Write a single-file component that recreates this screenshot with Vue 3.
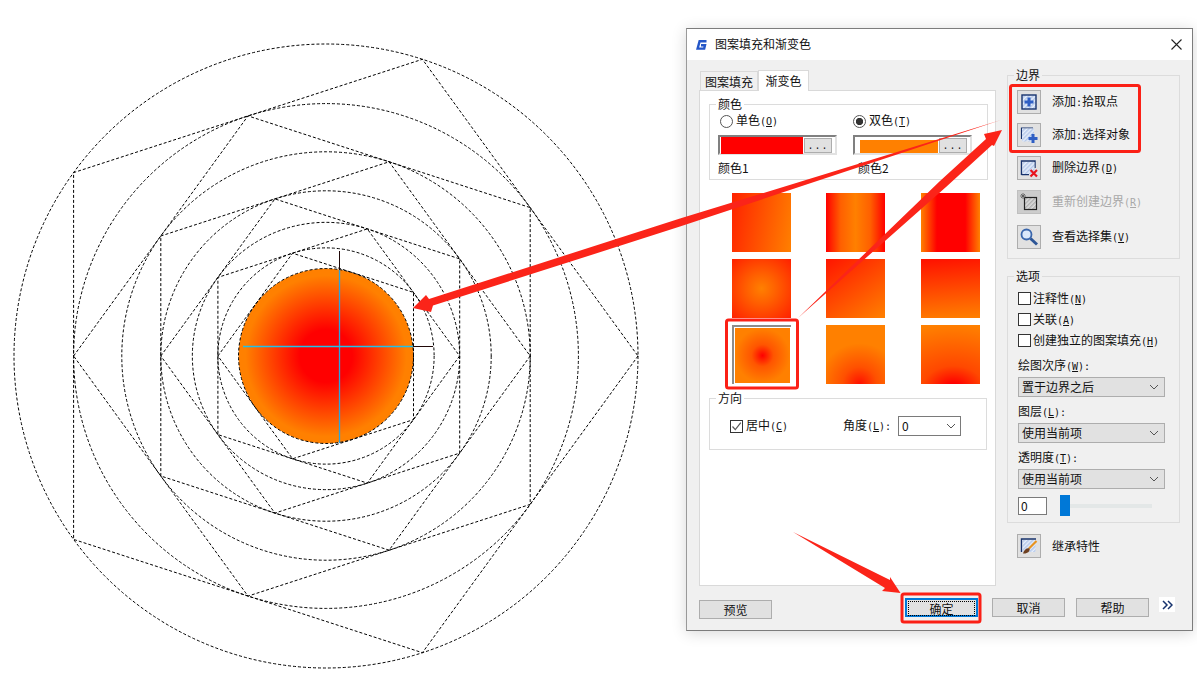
<template>
  <div class="page">
    <svg class="drawing" width="686" height="678" viewBox="0 0 686 678">
      <defs>
        <radialGradient id="fillGrad" cx="0.5" cy="0.5" r="0.5">
          <stop offset="0.3" stop-color="#ff0000" />
          <stop offset="0.92" stop-color="#ff8000" />
        </radialGradient>
      </defs>
      <circle :cx="cx" :cy="cy" :r="radii[6]" fill="url(#fillGrad)" />
      <circle
        v-for="r in radii"
        :key="r"
        :cx="cx"
        :cy="cy"
        :r="r"
        fill="none"
        stroke="#000"
        stroke-dasharray="3 2"
      />
      <polygon
        v-for="p in pentagons"
        :key="p"
        :points="p"
        fill="none"
        stroke="#000"
        stroke-dasharray="3 2"
      />
      <path d="M339.5 251V270M413 346.5H433" stroke="#200808" fill="none" />
      <path d="M339.5 270V443" stroke="#2aa4e0" stroke-width="1.3" fill="none" />
      <path d="M243 346.5H413" stroke="#22c0e8" stroke-width="1.5" fill="none" />
    </svg>

    <div class="dialog">
      <div class="titlebar">
        <svg class="logo" width="14" height="14" viewBox="0 0 14 14">
          <path d="M12.5 3.2H5.6L3.6 10.6H10.2L11 7.2H7" fill="none" stroke="#2456c8" stroke-width="2.4" />
        </svg>
        <span class="title">图案填充和渐变色</span>
        <svg class="close" width="11" height="11" viewBox="0 0 11 11">
          <path d="M0.5 0.5L10.5 10.5M10.5 0.5L0.5 10.5" stroke="#222" stroke-width="1.1" />
        </svg>
      </div>

      <div class="columns">
        <div class="left">
          <div class="tabs">
            <div class="tab">图案填充</div>
            <div class="tab active">渐变色</div>
          </div>
          <div class="panel">
            <div class="group color-group">
              <span class="legend">颜色</span>
              <div class="color-col">
                <div class="radio-row first">
                  <span class="radio"></span>
                  <span>单色<span class="key">(<u>O</u>)</span></span>
                </div>
                <div class="swatch">
                  <span class="swatch-fill red"></span>
                  <span class="dots">...</span>
                </div>
                <div class="color-label">颜色1</div>
              </div>
              <div class="color-col">
                <div class="radio-row">
                  <span class="radio checked"></span>
                  <span>双色<span class="key">(<u>T</u>)</span></span>
                </div>
                <div class="swatch">
                  <span class="swatch-fill orange"></span>
                  <span class="dots">...</span>
                </div>
                <div class="color-label shifted">颜色2</div>
              </div>
            </div>

            <div class="tiles">
              <div
                v-for="t in tiles"
                :key="t"
                class="tile"
                :class="t"
              ></div>
            </div>

            <div class="group direction">
              <span class="legend">方向</span>
              <span class="check on">
                <svg width="11" height="11" viewBox="0 0 11 11">
                  <path d="M1.5 5.5L4.3 8.6L9.8 1.6" fill="none" stroke="#555" stroke-width="1.2" />
                </svg>
              </span>
              <span class="centered">居中<span class="key">(<u>C</u>)</span></span>
              <span class="angle">角度<span class="key">(<u>L</u>):</span></span>
              <div class="angle-select">
                <span>0</span>
                <svg width="10" height="6" viewBox="0 0 10 6">
                  <path d="M1 1L5 5L9 1" fill="none" stroke="#555" />
                </svg>
              </div>
            </div>
          </div>
        </div>

        <div class="right">
          <div class="group bounds">
            <span class="legend soft">边界</span>
            <div v-for="a in actions" :key="a.icon" class="action" :class="{ off: a.off }">
              <span class="icon-btn">
                <svg width="20" height="20" viewBox="0 0 20 20">
                  <template v-if="a.icon === 'pick'">
                    <rect x="3" y="3" width="14" height="14" fill="url(#hatch)" stroke="#17336e" stroke-width="1.4" />
                    <path d="M10 5.5V14.5M5.5 10H14.5" stroke="#2f5fc4" stroke-width="3" />
                  </template>
                  <template v-else-if="a.icon === 'select'">
                    <path d="M2.5 14V3H14" fill="none" stroke="#17336e" stroke-width="1.2" />
                    <rect x="3" y="3.5" width="12" height="13" fill="url(#hatch)" />
                    <path d="M14 9V18M9.5 13.5H18.5" stroke="#2f5fc4" stroke-width="3" />
                  </template>
                  <template v-else-if="a.icon === 'remove'">
                    <path d="M2.5 17V3H16V10M2.5 16.5H10" fill="none" stroke="#17336e" stroke-width="1.4" />
                    <rect x="3.5" y="4" width="12" height="12" fill="url(#hatch)" />
                    <path d="M11.5 12L18 18.5M18 12L11.5 18.5" stroke="#e8141c" stroke-width="2.2" />
                  </template>
                  <template v-else-if="a.icon === 'rebuild'">
                    <rect x="5.5" y="5.5" width="12" height="12" fill="url(#grayHatch)" stroke="#222" stroke-width="1.2" />
                    <path d="M4 1V7M1 4H7M2 2L6 6M6 2L2 6" stroke="#555" stroke-width="0.8" />
                  </template>
                  <template v-else>
                    <circle cx="7.5" cy="7.5" r="5" fill="#dbe8fa" stroke="#3a66ac" stroke-width="1.8" />
                    <path d="M11.5 11.5L18 17.5" stroke="#2c5596" stroke-width="3" />
                  </template>
                </svg>
              </span>
              <span class="action-text">
                <template v-if="a.pre">{{ a.pre }}<span class="key">:</span></template>{{ a.text }}<span v-if="a.key" class="key">(<u>{{ a.key }}</u>)</span>
              </span>
            </div>
          </div>

          <div class="group options">
            <span class="legend soft">选项</span>
            <div class="check-row">
              <span class="check"></span>
              <span>注释性<span class="key">(<u>N</u>)</span></span>
            </div>
            <div class="check-row">
              <span class="check"></span>
              <span>关联<span class="key">(<u>A</u>)</span></span>
            </div>
            <div class="check-row">
              <span class="check"></span>
              <span>创建独立的图案填充<span class="key">(<u>H</u>)</span></span>
            </div>
            <div class="field-label first-field">绘图次序<span class="key">(<u>W</u>):</span></div>
            <div class="select">
              <span>置于边界之后</span>
              <svg width="10" height="6" viewBox="0 0 10 6"><path d="M1 1L5 5L9 1" fill="none" stroke="#555" /></svg>
            </div>
            <div class="field-label">图层<span class="key">(<u>L</u>):</span></div>
            <div class="select">
              <span>使用当前项</span>
              <svg width="10" height="6" viewBox="0 0 10 6"><path d="M1 1L5 5L9 1" fill="none" stroke="#555" /></svg>
            </div>
            <div class="field-label">透明度<span class="key">(<u>T</u>):</span></div>
            <div class="select">
              <span>使用当前项</span>
              <svg width="10" height="6" viewBox="0 0 10 6"><path d="M1 1L5 5L9 1" fill="none" stroke="#555" /></svg>
            </div>
            <div class="slider-row">
              <div class="num">0</div>
              <div class="slider">
                <span class="thumb"></span>
                <span class="track"></span>
              </div>
            </div>
          </div>

          <div class="action inherit">
            <span class="icon-btn">
              <svg width="20" height="20" viewBox="0 0 20 20">
                <path d="M2.5 16V3H17" fill="none" stroke="#17336e" stroke-width="1.4" />
                <rect x="3.5" y="4" width="13" height="12" fill="url(#hatch)" />
                <path d="M17.5 5L10 12.5" stroke="#e8931e" stroke-width="2.2" />
                <path d="M4 17.5C5 13.5 8 11.5 10.5 12.5C11.5 15 8.5 18 4 17.5Z" fill="#6e4020" />
              </svg>
            </span>
            <span class="action-text">继承特性</span>
          </div>
        </div>
      </div>

      <div class="footer">
        <div class="btn preview">预览</div>
        <div class="btn ok"><span class="ok-inner">确定</span></div>
        <div class="btn cancel">取消</div>
        <div class="btn help">帮助</div>
        <div class="more">
          <svg width="11" height="10" viewBox="0 0 11 10">
            <path d="M1 1L5 5L1 9M6 1L10 5L6 9" fill="none" stroke="#17336e" stroke-width="1.5" />
          </svg>
        </div>
      </div>
    </div>

    <svg class="overlay" width="1197" height="678" viewBox="0 0 1197 678">
      <defs>
        <pattern id="hatch" width="3" height="3" patternUnits="userSpaceOnUse" patternTransform="rotate(45)">
          <rect width="3" height="3" fill="#e6eefb" />
          <rect width="1.5" height="3" fill="#b4c8ea" />
        </pattern>
        <pattern id="grayHatch" width="3" height="3" patternUnits="userSpaceOnUse" patternTransform="rotate(45)">
          <rect width="3" height="3" fill="#dedede" />
          <rect width="1.5" height="3" fill="#b0b0b0" />
        </pattern>
      </defs>
      <g fill="none" stroke="#fb2016" stroke-width="3">
        <rect x="1010.5" y="85.5" width="129" height="66" rx="2" />
        <rect x="726.5" y="320" width="71" height="68" rx="2" />
        <rect x="902" y="594" width="78" height="28" rx="2" />
      </g>
      <g fill="#fb2419">
        <polygon points="1001,120 680,218.6 429,299 426,295 413,308 431,312 433,305.6 680,226.6" />
        <polygon points="798,318 940,181 986,139 984,134 1002,130 994,146 992,145 946,187" />
        <polygon points="793,532 890,580 890,577 900.5,593 882,591 885,588" />
      </g>
    </svg>
  </div>
</template>

<script setup>
const cx = 326
const cy = 356

// each circle is inscribed in the previous pentagon
const radii = []
for (let i = 0; i < 7; i++) {
  radii.push(+(312 * Math.pow(Math.cos(Math.PI / 5), i)).toFixed(2))
}

const pentagons = radii.slice(0, 6).map((r, i) => {
  const pts = []
  for (let k = 0; k < 5; k++) {
    const a = (k * 72 + (i % 2 ? 180 : 0)) * Math.PI / 180
    pts.push((cx + r * Math.cos(a)).toFixed(1) + ',' + (cy + r * Math.sin(a)).toFixed(1))
  }
  return pts.join(' ')
})

const tiles = ['t1', 't2', 't3', 't4', 't5', 't6', 't7', 't8', 't9']

const actions = [
  { icon: 'pick', pre: '添加', text: '拾取点' },
  { icon: 'select', pre: '添加', text: '选择对象' },
  { icon: 'remove', text: '删除边界', key: 'D' },
  { icon: 'rebuild', text: '重新创建边界', key: 'R', off: true },
  { icon: 'view', text: '查看选择集', key: 'V' }
]
</script>

<style>
html, body {
  margin: 0;
  background: #fff;
}
</style>

<style scoped>
.page {
  position: relative;
  display: flex;
  align-items: flex-start;
  width: 1197px;
  height: 678px;
  overflow: hidden;
  background: #fff;
  font-family: "Noto Sans CJK SC", "Liberation Sans", sans-serif;
  font-size: 12px;
  line-height: 14px;
  color: #111;
}
.drawing {
  flex: none;
  display: block;
}
.overlay {
  position: absolute;
  left: 0;
  top: 0;
  pointer-events: none;
}
.key {
  font-family: "DejaVu Sans Mono", monospace;
  font-size: 10px;
}

.dialog {
  flex: none;
  box-sizing: border-box;
  width: 507px;
  height: 603px;
  margin-top: 28px;
  background: #f0f0f0;
  border: 1px solid #7c7c7c;
  border-left-color: #999;
  box-shadow: 0 2px 14px rgba(0, 0, 0, 0.16);
}
.titlebar {
  display: flex;
  align-items: center;
  height: 31px;
  padding: 0 10px 0 7px;
  background: #fff;
}
.logo {
  margin-right: 7px;
}
.title {
  flex: 1;
  margin-top: -2px;
}
.columns {
  display: flex;
  padding: 9px 0 0 12px;
}
.left {
  width: 297px;
}
.tabs {
  display: flex;
  align-items: flex-end;
  height: 21px;
  padding-left: 1px;
}
.tab {
  box-sizing: border-box;
  width: 58px;
  height: 19px;
  padding-top: 3px;
  text-align: center;
  border: 1px solid #d9d9d9;
  border-bottom: none;
  background: #f0f0f0;
}
.tab.active {
  width: 51px;
  height: 21px;
  background: #fff;
  margin-bottom: -1px;
  position: relative;
}
.panel {
  box-sizing: border-box;
  height: 496px;
  padding: 13px 0 0 9px;
  background: #fff;
  border: 1px solid #d9d9d9;
}
.group {
  position: relative;
  box-sizing: border-box;
  border: 1px solid #dcdcdc;
}
.legend {
  position: absolute;
  left: 6px;
  top: -8px;
  padding: 0 2px;
  background: #fff;
}
.legend.soft {
  background: #f0f0f0;
}
.color-group {
  display: grid;
  grid-template-columns: 135px 1fr;
  width: 279px;
  height: 76px;
  padding: 9px 0 0 8px;
}
.radio-row {
  display: flex;
  align-items: center;
  gap: 3px;
  height: 14px;
}
.radio-row.first {
  padding-left: 2px;
}
.radio {
  box-sizing: border-box;
  width: 13px;
  height: 13px;
  border: 1px solid #555;
  border-radius: 50%;
  background: #fff;
}
.radio.checked {
  background: radial-gradient(circle, #333 0 3.4px, #fff 3.9px);
}
.swatch {
  box-sizing: border-box;
  display: flex;
  align-items: center;
  width: 119px;
  height: 20px;
  margin-top: 7px;
  padding: 1px 3px 0 1px;
  border: 2px solid #e2e2e2;
  border-top-color: #808080;
  border-left-color: #808080;
  background: #fff;
}
.swatch-fill {
  flex: 1;
  margin-right: 1px;
}
.swatch-fill.red {
  height: 17px;
  background: #ff0000;
}
.swatch-fill.orange {
  height: 13px;
  margin: 2px 1px 0 4px;
  background: #ff8000;
}
.dots {
  box-sizing: border-box;
  width: 28px;
  height: 15px;
  font-family: "Liberation Mono", monospace;
  font-size: 10px;
  line-height: 15px;
  letter-spacing: 1px;
  text-align: center;
  background: #e1e1e1;
  border: 1px solid #adadad;
}
.color-label {
  margin-top: 6px;
}
.color-label.shifted {
  margin-left: 5px;
}
.tiles {
  display: grid;
  grid-template-columns: 94px 95px 59px;
  row-gap: 7px;
  margin: 13px 0 0 23px;
}
.tile {
  width: 59px;
  height: 59px;
}
.t1 { background: linear-gradient(100deg, #ff2200, #ff8000); }
.t2 { background: linear-gradient(90deg, #ff0000, #ff6000 25%, #ff8000 50%, #ff6000 75%, #ff0000); }
.t3 { background: linear-gradient(90deg, #ff8000, #ff0000 27%, #ff0000 75%, #ff8000); }
.t4 { background: radial-gradient(circle at 50% 50%, #ff8000, #ff6000 35%, #ff2000 100%); }
.t5 { background: linear-gradient(145deg, #ff1500, #ff8000); }
.t6 { background: linear-gradient(175deg, #ff1000, #ff8000); }
.t7 {
  box-sizing: border-box;
  border-top: 2px solid #8c8c8c;
  border-left: 2px solid #8c8c8c;
  padding: 1px;
  background: radial-gradient(circle at 50% 50%, #ff0000, #ff5500 28%, #ff8000 70%) content-box;
}
.t8 { background: radial-gradient(circle at 57% 100%, #ff1000, #ff5000 25%, #ff8000 60%); }
.t9 { background: radial-gradient(150% 110% at 55% 108%, #ff0000 8%, #ff4800 35%, #ff8000 100%); }

.direction {
  display: flex;
  align-items: center;
  width: 278px;
  height: 52px;
  margin-top: 14px;
  padding: 4px 0 0 20px;
}
.check {
  box-sizing: border-box;
  display: inline-flex;
  align-items: center;
  justify-content: center;
  width: 13px;
  height: 13px;
  border: 1px solid #333;
  background: #fff;
}
.centered {
  margin-left: 3px;
  width: 97px;
}
.angle {
  width: 55px;
}
.angle-select {
  box-sizing: border-box;
  display: flex;
  align-items: center;
  justify-content: space-between;
  width: 63px;
  height: 20px;
  padding: 0 4px 0 3px;
  background: #fff;
  border: 1px solid #7a7a7a;
}

.right {
  width: 173px;
  margin: 6px 0 0 11px;
}
.bounds {
  height: 184px;
  padding: 14px 0 0 9px;
}
.action {
  display: flex;
  align-items: center;
  gap: 11px;
  height: 24px;
  margin-bottom: 9px;
}
.action:nth-of-type(3) {
  margin-bottom: 10px;
}
.action:nth-of-type(4) {
  margin-bottom: 11px;
}
.icon-btn {
  box-sizing: border-box;
  display: flex;
  align-items: center;
  justify-content: center;
  width: 24px;
  height: 24px;
  background: #e1e1e1;
  border: 1px solid #adadad;
}
.action.off .icon-btn {
  background: #cccccc;
  border-color: #bfbfbf;
}
.action.off .action-text {
  color: #a8a8a8;
}
.options {
  height: 247px;
  margin-top: 17px;
  padding: 15px 0 0 10px;
}
.check-row {
  display: flex;
  align-items: center;
  gap: 2px;
  height: 13px;
  margin-bottom: 8px;
}
.field-label {
  height: 14px;
  margin: 7px 0 5px;
}
.field-label.first-field {
  margin-top: 11px;
}
.select {
  box-sizing: border-box;
  display: flex;
  align-items: center;
  justify-content: space-between;
  width: 147px;
  height: 20px;
  padding: 0 5px 0 3px;
  background: #e1e1e1;
  border: 1px solid #adadad;
}
.slider-row {
  display: flex;
  align-items: center;
  margin-top: 6px;
}
.num {
  box-sizing: border-box;
  width: 29px;
  height: 18px;
  padding-left: 2px;
  line-height: 16px;
  background: #fff;
  border: 1px solid #7a7a7a;
}
.slider {
  display: flex;
  align-items: center;
  margin-left: 13px;
}
.thumb {
  width: 10px;
  height: 21px;
  background: #0078d7;
}
.track {
  width: 82px;
  height: 4px;
  background: #e3e7e7;
}
.inherit {
  margin: 11px 0 0 10px;
}

.footer {
  display: flex;
  align-items: flex-start;
  margin-top: 12px;
  padding-left: 12px;
}
.btn {
  box-sizing: border-box;
  width: 73px;
  height: 19px;
  line-height: 17px;
  text-align: center;
  background: #e1e1e1;
  border: 1px solid #adadad;
}
.preview {
  margin: 2px 133px 0 0;
}
.ok {
  padding: 1px;
  line-height: 13px;
  border: 2px solid #0078d7;
}
.ok-inner {
  display: block;
  height: 13px;
  border: 1px dotted #000;
}
.cancel {
  margin-left: 14px;
}
.help {
  margin-left: 11px;
}
.more {
  display: flex;
  align-items: center;
  justify-content: center;
  width: 16px;
  height: 15px;
  margin: -1px 0 0 10px;
  background: #fff;
}
</style>
